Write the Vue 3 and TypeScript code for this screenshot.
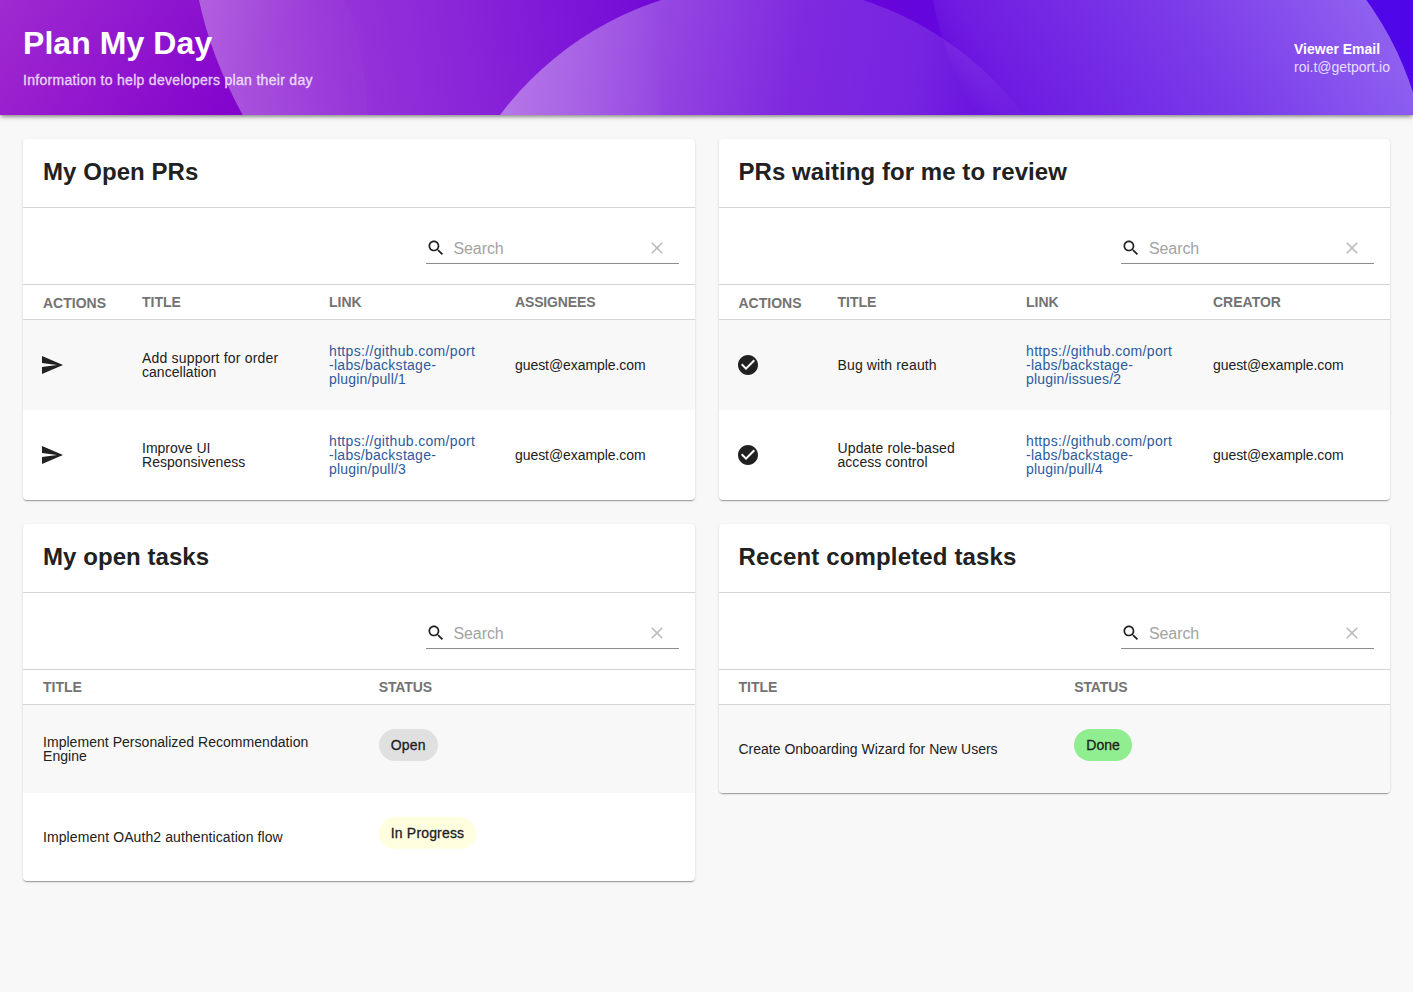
<script setup lang="ts">
interface Row {
  title: string[]
  link?: string[]
  person?: string
  status?: string
  tone?: string
}
interface Card {
  title: string
  kind: string
  icon?: 'send' | 'check'
  heads: string[]
  rows: Row[]
}

const cards: Card[] = [
  {
    title: 'My Open PRs',
    kind: 'prs mine',
    icon: 'send',
    heads: ['Actions', 'Title', 'Link', 'Assignees'],
    rows: [
      { title: ['Add support for order', 'cancellation'], link: ['https://github.com/port', '-labs/backstage-', 'plugin/pull/1'], person: 'guest@example.com' },
      { title: ['Improve UI', 'Responsiveness'], link: ['https://github.com/port', '-labs/backstage-', 'plugin/pull/3'], person: 'guest@example.com' },
    ],
  },
  {
    title: 'PRs waiting for me to review',
    kind: 'prs review',
    icon: 'check',
    heads: ['Actions', 'Title', 'Link', 'Creator'],
    rows: [
      { title: ['Bug with reauth'], link: ['https://github.com/port', '-labs/backstage-', 'plugin/issues/2'], person: 'guest@example.com' },
      { title: ['Update role-based', 'access control'], link: ['https://github.com/port', '-labs/backstage-', 'plugin/pull/4'], person: 'guest@example.com' },
    ],
  },
  {
    title: 'My open tasks',
    kind: 'tasks',
    heads: ['Title', 'Status'],
    rows: [
      { title: ['Implement Personalized Recommendation', 'Engine'], status: 'Open', tone: 'grey' },
      { title: ['Implement OAuth2 authentication flow'], status: 'In Progress', tone: 'yellow' },
    ],
  },
  {
    title: 'Recent completed tasks',
    kind: 'tasks recent',
    heads: ['Title', 'Status'],
    rows: [{ title: ['Create Onboarding Wizard for New Users'], status: 'Done', tone: 'green' }],
  },
]
</script>

<template>
  <div class="page">
    <header class="banner">
      <svg class="art" viewBox="0 0 1413 115" preserveAspectRatio="none" aria-hidden="true">
        <defs>
          <linearGradient id="base" gradientUnits="userSpaceOnUse" x1="0" y1="0" x2="1413" y2="0">
            <stop offset="0" stop-color="#8e05c8" /><stop offset="1" stop-color="#4e06e8" />
          </linearGradient>
          <linearGradient id="corner" gradientUnits="userSpaceOnUse" x1="0" y1="0" x2="190" y2="150">
            <stop offset="0" stop-color="#fff" stop-opacity=".15" /><stop offset="1" stop-color="#fff" stop-opacity="0" />
          </linearGradient>
          <linearGradient id="fadeA" gradientUnits="userSpaceOnUse" x1="195" y1="0" x2="650" y2="-60">
            <stop offset="0" stop-color="#fff" stop-opacity=".32" /><stop offset=".33" stop-color="#fff" stop-opacity=".18" /><stop offset=".6" stop-color="#fff" stop-opacity=".12" /><stop offset=".95" stop-color="#fff" stop-opacity=".03" /><stop offset="1" stop-color="#fff" stop-opacity="0" />
          </linearGradient>
          <linearGradient id="fadeB" gradientUnits="userSpaceOnUse" x1="500" y1="50" x2="1020" y2="154">
            <stop offset="0" stop-color="#fff" stop-opacity=".4" /><stop offset=".56" stop-color="#fff" stop-opacity=".14" /><stop offset=".78" stop-color="#fff" stop-opacity=".12" /><stop offset="1" stop-color="#fff" stop-opacity=".01" />
          </linearGradient>
          <linearGradient id="fadeC" gradientUnits="userSpaceOnUse" x1="975" y1="115" x2="1355" y2="-115">
            <stop offset="0" stop-color="#fff" stop-opacity="0" /><stop offset=".05" stop-color="#fff" stop-opacity=".06" /><stop offset=".1" stop-color="#fff" stop-opacity=".09" /><stop offset=".5" stop-color="#fff" stop-opacity=".21" /><stop offset=".88" stop-color="#fff" stop-opacity=".36" />
          </linearGradient>
          <clipPath id="leftLens"><circle cx="40" cy="118" r="327.5" /></clipPath>
          <clipPath id="rightLens"><circle cx="1101" cy="192" r="327.5" /></clipPath>
        </defs>
        <rect width="1413" height="115" fill="url(#base)" />
        <rect width="1413" height="115" fill="url(#corner)" />
        <path d="M199 0Q211 57 242.700 115H660V0Z" fill="url(#fadeA)" />
        <circle cx="523" cy="-58" r="329" fill="#fff" fill-opacity=".02" clip-path="url(#leftLens)" />
        <circle cx="762" cy="311.6" r="327.5" fill="url(#fadeB)" />
        <circle cx="1257" cy="-58" r="329" fill="url(#fadeC)" clip-path="url(#rightLens)" />
      </svg>
      <div class="intro">
        <h1>Plan My Day</h1>
        <p>Information to help developers plan their day</p>
      </div>
      <div class="viewer">
        <strong>Viewer Email</strong>
        <span>roi.t@getport.io</span>
      </div>
    </header>

    <main class="grid">
      <section v-for="card in cards" :key="card.title" class="card" :class="card.kind">
        <h2>{{ card.title }}</h2>
        <div class="toolbar">
          <div class="search">
            <svg class="glass" viewBox="0 0 24 24"><path d="M15.5 14h-.79l-.28-.27C15.41 12.59 16 11.11 16 9.5 16 5.91 13.09 3 9.5 3S3 5.91 3 9.5 5.91 16 9.5 16c1.61 0 3.09-.59 4.23-1.57l.27.28v.79l5 4.99L20.49 19l-4.99-5zm-6 0C7.01 14 5 11.99 5 9.5S7.01 5 9.5 5 14 7.01 14 9.5 11.99 14 9.5 14z" /></svg>
            <span>Search</span>
            <svg class="clear" viewBox="0 0 24 24"><path d="M19 6.41 17.59 5 12 10.59 6.41 5 5 6.41 10.59 12 5 17.59 6.41 19 12 13.41 17.59 19 19 17.59 13.41 12z" /></svg>
          </div>
        </div>
        <div class="row head">
          <span v-for="h in card.heads" :key="h" :class="'col-' + h.toLowerCase()">{{ h }}</span>
        </div>
        <div v-for="(row, i) in card.rows" :key="i" class="row body">
          <div v-if="card.icon" class="action">
            <svg v-if="card.icon === 'send'" viewBox="0 0 24 24"><path d="M2.01 21 23 12 2.01 3 2 10l15 2-15 2z" /></svg>
            <svg v-else viewBox="0 0 24 24"><path d="M12 2C6.48 2 2 6.48 2 12s4.48 10 10 10 10-4.48 10-10S17.52 2 12 2zm-2 15-5-5 1.41-1.41L10 14.17l7.59-7.59L19 8l-9 9z" /></svg>
          </div>
          <div class="name"><div v-for="t in row.title" :key="t">{{ t }}</div></div>
          <a v-if="row.link" class="link"><div v-for="t in row.link" :key="t">{{ t }}</div></a>
          <div v-if="row.person" class="person">{{ row.person }}</div>
          <div v-if="row.status" class="status-cell"><span class="chip" :class="row.tone">{{ row.status }}</span></div>
        </div>
      </section>
    </main>
  </div>
</template>

<style>
body {
  background: #f8f8f8;
}
</style>

<style scoped>
.page {
  min-height: 992px;
  background: #f8f8f8;
  color: #212121;
  font-family: 'Liberation Sans', Arial, sans-serif;
  font-size: 14px;
}
.banner {
  position: relative;
  display: flex;
  justify-content: space-between;
  align-items: center;
  height: 115px;
  padding: 0 23px;
  box-sizing: border-box;
  color: #fff;
  box-shadow: 0 2px 4px -1px rgba(0, 0, 0, 0.4), 0 1px 6px rgba(0, 0, 0, 0.25);
}
.art {
  position: absolute;
  inset: 0;
  width: 100%;
  height: 100%;
}
.intro,
.viewer {
  position: relative;
}
.intro {
  padding-bottom: 2px;
}
h1 {
  margin: 0 0 8px;
  font-size: 32px;
  line-height: 38px;
  font-weight: 700;
  letter-spacing: 0.07px;
}
.intro p {
  margin: 0;
  line-height: 20px;
  opacity: 0.8;
  -webkit-text-stroke: 0.3px currentColor;
  letter-spacing: 0.3px;
}
.viewer {
  display: flex;
  flex-direction: column;
  line-height: 18px;
  width: 96px;
  white-space: nowrap;
}
.viewer span {
  opacity: 0.8;
}
.grid {
  display: grid;
  grid-template-columns: 1fr 1fr;
  gap: 24px;
  align-items: start;
  padding: 24px 23px;
}
.card {
  overflow: hidden;
  border-radius: 4px;
  background: #fff;
  box-shadow: 0 2px 1px -1px rgba(0, 0, 0, 0.2), 0 1px 1px rgba(0, 0, 0, 0.14), 0 1px 3px rgba(0, 0, 0, 0.12);
}
h2 {
  margin: 0;
  height: 69px;
  box-sizing: border-box;
  padding: 19px 20px 0;
  border-bottom: 1px solid #d5d5d5;
  font-size: 24px;
  line-height: 28px;
  letter-spacing: 0.06px;
}
.recent h2 {
  letter-spacing: 0.15px;
}
.toolbar {
  display: flex;
  justify-content: flex-end;
  height: 76px;
  padding: 24px 16px 0 0;
  box-sizing: border-box;
}
.search {
  display: flex;
  align-items: center;
  width: 253px;
  height: 32px;
  box-sizing: border-box;
  border-bottom: 1px solid #8c8c8c;
  color: #a3a3a3;
  font-size: 16px;
}
.search span {
  margin-left: 8px;
  padding-top: 2px;
  flex: 1;
  letter-spacing: -0.1px;
}
.glass {
  width: 20px;
  height: 20px;
  fill: #212121;
}
.clear {
  width: 20px;
  height: 20px;
  margin-right: 12px;
  fill: #bdbdbd;
}
.row {
  display: grid;
  align-items: center;
  padding-left: 20px;
}
.mine .row {
  grid-template-columns: 99px 187px 186px 1fr;
}
.review .row {
  grid-template-columns: 99px 188.5px 187px 1fr;
}
.tasks .row {
  grid-template-columns: 335.8px 1fr;
}
.head {
  height: 36px;
  box-sizing: border-box;
  border-top: 1px solid #d5d5d5;
  border-bottom: 1px solid #d5d5d5;
  color: #737373;
  font-weight: 700;
  text-transform: uppercase;
}
.col-actions {
  padding-top: 2px;
}
.col-assignees,
.col-status {
  letter-spacing: -0.15px;
}
.body {
  height: 90px;
  line-height: 14px;
}
.tasks .body {
  height: 88px;
}
.head + .body {
  background: #f8f8f8;
}
.action svg {
  display: block;
  width: 24px;
  height: 24px;
  margin-left: -3px;
  fill: #212121;
}
.name {
  letter-spacing: 0.04px;
}
.tasks .body:last-child .name {
  letter-spacing: 0.09px;
}
.recent .body:last-child .name {
  letter-spacing: 0;
}
.prs .name div:first-child {
  letter-spacing: 0.13px;
}
.mine .body:last-child .name div:first-child {
  letter-spacing: 0;
}
.mine .head + .body .name div:first-child {
  letter-spacing: 0.19px;
}
.link {
  color: #2e5a9c;
}
.link div {
  letter-spacing: 0.34px;
}
.link div:nth-child(2) {
  letter-spacing: 0.28px;
}
.link div:nth-child(3) {
  letter-spacing: 0.17px;
}
.person {
  letter-spacing: -0.07px;
}
.status-cell {
  padding-bottom: 8px;
}
.chip {
  display: inline-block;
  height: 32px;
  padding: 0 12px;
  border-radius: 16px;
  line-height: 32px;
  letter-spacing: 0.17px;
  -webkit-text-stroke: 0.3px currentColor;
}
.grey {
  background: #e0e0e0;
}
.yellow {
  background: #ffffe0;
}
.green {
  background: #90ee90;
  letter-spacing: 0;
}
</style>
